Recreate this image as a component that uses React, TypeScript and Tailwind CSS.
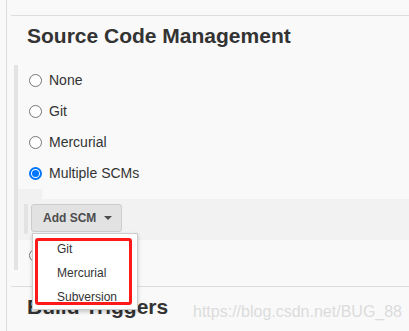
import React from 'react';

type RadioProps = { checked?: boolean };

function Radio({ checked = false }: RadioProps) {
    if (checked) {
        return (
            <span className="flex h-[13px] w-[13px] shrink-0 items-center justify-center rounded-full border-2 border-[#0075ff] bg-white">
                <span className="h-[7px] w-[7px] rounded-full bg-[#0075ff]" />
            </span>
        );
    }
    return <span className="h-[13px] w-[13px] shrink-0 rounded-full border border-[#767676] bg-white" />;
}

const scmOptions = [
    { label: 'None', checked: false },
    { label: 'Git', checked: false },
    { label: 'Mercurial', checked: false },
    { label: 'Multiple SCMs', checked: true },
];

const menuItems = ['Git', 'Mercurial', 'Subversion'];

export default function App() {
    return (
        <div className="relative h-[331px] w-[409px] overflow-hidden bg-[#f9f9f9] font-['Liberation_Sans',Arial,sans-serif] text-[#333]">
            <div className="ml-[6px] h-full border-l border-[#dddddd] pt-[15px]">
                {/* Source Code Management */}
                <section className="ml-[4px] border-t border-[#dddddd]">
                    <h2 className="pl-[16px] pt-[7px] text-[21px] font-bold leading-[25px]">
                        Source Code Management
                    </h2>

                    <div className="ml-[3px] mt-[17px] border-l-4 border-[#e3e3e3]">
                        {scmOptions.map((opt) => (
                            <div key={opt.label} className="flex h-[31px] items-center gap-[7px] pl-[11px] text-[14px]">
                                <Radio checked={opt.checked} />
                                <span>{opt.label}</span>
                            </div>
                        ))}

                        <div className="h-[10px]">
                            <div className="h-full w-[24px] bg-[#f1f1f1]" />
                        </div>

                        <div className="flex h-[41px] items-start bg-[#f2f2f2] pl-[6px] pt-[5px]">
                            <div className="h-[30px] w-[4px] bg-[#e3e3e3]" />
                            <button className="ml-[3px] flex h-[28px] items-center rounded-[3px] border border-[#cccccc] bg-[#e2e2e2] pl-[11px] pr-[9px] text-[12px] font-bold text-[#4d4d4d]">
                                Add SCM
                                <span className="ml-[8px] h-0 w-0 border-l-[4px] border-r-[4px] border-t-[4px] border-l-transparent border-r-transparent border-t-[#4d4d4d]" />
                            </button>
                        </div>

                        <div className="flex h-[30px] items-center gap-[7px] pl-[11px] text-[14px]">
                            <Radio />
                            <span>Subversion</span>
                        </div>
                    </div>
                </section>

                {/* Build Triggers */}
                <section className="ml-[4px] mt-[16px] border-t border-[#dddddd]">
                    <h2 className="pl-[16px] pt-[7px] text-[21px] font-bold leading-[25px]">Build Triggers</h2>
                </section>
            </div>

            {/* dropdown menu */}
            <div className="absolute left-[32px] top-[233px] w-[106px] border border-[#cccccc] bg-white pt-[3px] shadow-[0_2px_4px_rgba(0,0,0,0.2)]">
                {menuItems.map((item) => (
                    <div key={item} className="h-[24px] pl-[24px] text-[12px] leading-[24px] text-[#333]">
                        {item}
                    </div>
                ))}
            </div>

            {/* annotation box */}
            <div className="absolute left-[35px] top-[238px] h-[67px] w-[97px] rounded-[3px] border-[3px] border-[#ff1a1a]" />

            {/* watermark */}
            <div className="absolute left-[193px] top-[303px] text-[16px] leading-[18px] text-[#dcdcdc]">
                https://blog.csdn.net/BUG_88
            </div>
        </div>
    );
}
